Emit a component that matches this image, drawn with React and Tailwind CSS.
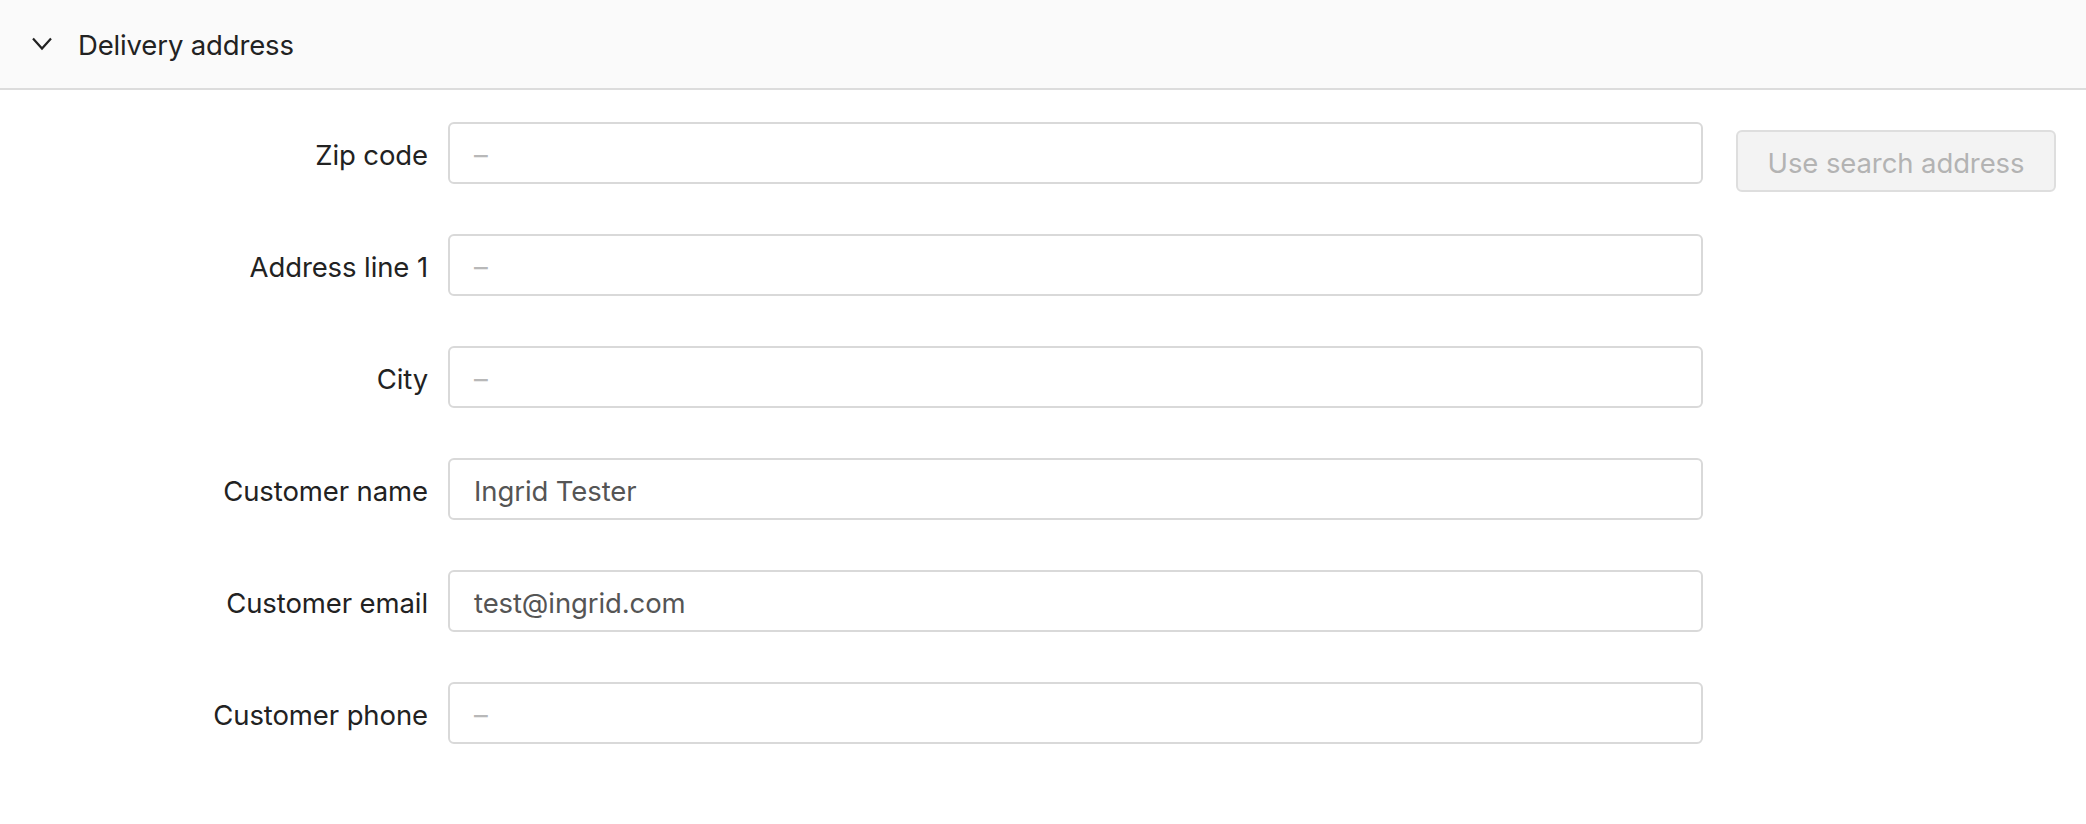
import React from "react";

const rows = [
  { label: "Zip code", value: "" },
  { label: "Address line 1", value: "" },
  { label: "City", value: "" },
  { label: "Customer name", value: "Ingrid Tester" },
  { label: "Customer email", value: "test@ingrid.com" },
  { label: "Customer phone", value: "" },
];

export default function App() {
  return (
    <div className="w-[2086px] h-[824px] bg-white" style={{ fontFamily: "Inter, 'Noto Sans', sans-serif" }}>
      <div className="h-[90px] bg-[#fafafa] border-b-2 border-[#dcdcdc] flex items-center">
        <svg className="ml-[32px] mt-[-1px]" width="20" height="14" viewBox="0 0 20 14" fill="none">
          <path d="M1 1.5 L10 11.5 L19 1.5" stroke="#222" strokeWidth="2.2" />
        </svg>
        <span className="ml-[26px] pt-[3px] text-[27.5px] text-[#222] tracking-[-0.15px]">Delivery address</span>
      </div>
      <div className="flex pt-[32px]">
        <div className="flex flex-col gap-[50px]">
          {rows.map((r) => (
            <div key={r.label} className="flex items-center">
              <div className="w-[428px] pt-[5px] text-right text-[27.5px] text-[#222] tracking-[-0.1px]">{r.label}</div>
              <div className="ml-[20px] w-[1255px] h-[62px] border-2 border-[#d9d9d9] rounded-[6px] flex items-center pl-[24px] pt-[5px] text-[27.5px]">
                {r.value ? (
                  <span className="text-[#555] tracking-[-0.1px]">{r.value}</span>
                ) : (
                  <span className="text-[#b8b8b8]">–</span>
                )}
              </div>
            </div>
          ))}
        </div>
        <div className="ml-[33px] mt-[8px]">
          <div className="w-[320px] h-[62px] bg-[#f3f3f3] border-2 border-[#dedede] rounded-[6px] flex items-center justify-center pt-[5px] text-[27.5px] text-[#b3b3b3] tracking-[-0.1px]">
            Use search address
          </div>
        </div>
      </div>
    </div>
  );
}
